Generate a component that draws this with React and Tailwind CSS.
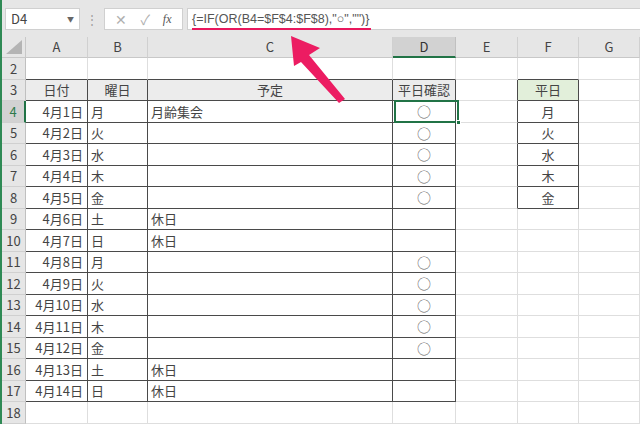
import React from "react";

const cols = ["A", "B", "C", "D", "E", "F", "G"];
const widths = ["w-[62px]", "w-[60px]", "w-[245px]", "w-[63px]", "w-[62px]", "w-[61px]", "w-[61px]"];

const days = ["月", "火", "水", "木", "金", "土", "日"];
const heiJitsu = ["月", "火", "水", "木", "金"];

// build the sheet rows 2..18
const buildRows = () => {
  const rows = [];
  rows.push({ n: 2, cells: {} });
  rows.push({
    n: 3,
    cells: { A: "日付", B: "曜日", C: "予定", D: "平日確認", F: "平日" },
  });
  for (let i = 0; i < 14; i++) {
    const day = days[i % 7];
    const cells = { A: `4月${i + 1}日`, B: day };
    if (i === 0) cells.C = "月齢集会";
    if (day === "土" || day === "日") cells.C = "休日";
    else cells.D = "○";
    if (i < 5) cells.F = heiJitsu[i];
    rows.push({ n: i + 4, cells });
  }
  rows.push({ n: 18, cells: {} });
  return rows;
};

const inTable = (r, c) => {
  if (r >= 3 && r <= 17 && c >= 0 && c <= 3) return true;
  if (r >= 3 && r <= 8 && c === 5) return true;
  return false;
};

const Cell = ({ r, ci, value, width }) => {
  const dark = inTable(r, ci);
  const rightDark = dark || inTable(r, ci + 1);
  const bottomDark = dark || inTable(r + 1, ci);
  const col = cols[ci];
  let align = "justify-start pl-[3px]";
  if (col === "A" && r !== 3) align = "justify-end pr-[4px]";
  if (r === 3 || col === "D" || col === "F") align = "justify-center";
  let bg = "bg-white";
  if (r === 3 && ci <= 3) bg = "bg-[#ececec]";
  if (r === 3 && ci === 5) bg = "bg-[#e2efda]";
  const isMark = value === "○";
  return (
    <div
      className={`${width} h-full shrink-0 flex items-center ${align} ${bg} border-r border-b ${
        rightDark ? "border-r-[#4a4a4a]" : "border-r-[#dedede]"
      } ${bottomDark ? "border-b-[#4a4a4a]" : "border-b-[#dedede]"} ${
        isMark ? "text-[14px] text-[#666] leading-[18px]" : "text-[13px] text-[#444]"
      } overflow-hidden whitespace-nowrap`}
    >
      {value}
    </div>
  );
};

const App = () => {
  const rows = buildRows();
  return (
    <div
      className="relative w-[640px] h-[424px] overflow-hidden bg-white border-l-2 border-l-[#2f8a55]"
      style={{ fontFamily: '"Noto Sans CJK JP", "Noto Sans", sans-serif' }}
    >
      {/* formula bar */}
      <div className="h-[37px] bg-[#e6e6e6] flex items-start pt-[8px] pl-[3px]">
        <div className="w-[75px] h-[22px] bg-white border border-[#d0d0d0] flex items-center justify-between px-[5px]">
          <span className="text-[13px] text-[#444]">D4</span>
          <span className="text-[7px] text-[#666]">▼</span>
        </div>
        <div className="w-[24px] h-[22px] flex items-center justify-center text-[12px] text-[#a0a0a0]">⋮</div>
        <div className="w-[79px] h-[22px] bg-white border border-[#d0d0d0] flex items-center justify-around px-[4px] text-[#b0b0b0]">
          <span className="text-[14px]">✕</span>
          <span className="text-[14px]">✓</span>
          <span
            className="text-[12px] italic text-[#555]"
            style={{ fontFamily: '"Liberation Serif", serif' }}
          >
            fx
          </span>
        </div>
        <div className="flex-1 h-[22px] ml-[4px] bg-white border border-[#d0d0d0] border-r-0 flex items-start pl-[4px] pt-[1px]">
          <span
            className="text-[12.5px] text-[#555] border-b-2 border-b-[#e8175d] leading-[18px] pr-[2px]"
            style={{ fontFamily: '"Liberation Sans", "Noto Sans CJK JP", sans-serif' }}
          >
            {'{=IF(OR(B4=$F$4:$F$8),"○","")}'}
          </span>
        </div>
      </div>

      {/* column headers */}
      <div className="flex h-[21px] bg-[#e6e6e6]">
        <div className="w-[24px] shrink-0 h-full border-r border-b border-[#c8c8c8] flex items-end justify-end p-[3px]">
          <svg width="16" height="14" viewBox="0 0 16 14">
            <polygon points="16,0 16,14 0,14" fill="#b4b4b4" />
          </svg>
        </div>
        {cols.map((c, i) => (
          <div
            key={c}
            className={`${widths[i]} shrink-0 h-full flex items-center justify-center text-[13px] border-r ${
              c === "D"
                ? "bg-[#d2d2d2] text-[#333] border-r-[#c0c0c0] border-b-2 border-b-[#217346]"
                : "text-[#444] border-r-[#d0d0d0] border-b border-b-[#c8c8c8]"
            }`}
          >
            {c}
          </div>
        ))}
      </div>

      {/* rows */}
      {rows.map((row) => (
        <div key={row.n} className="flex h-[21.5px]">
          <div
            className={`w-[24px] shrink-0 h-full flex items-center justify-center text-[13px] border-b border-b-[#d0d0d0] ${
              row.n === 4
                ? "bg-[#d2d2d2] text-[#2f7a4b] border-r-2 border-r-[#217346]"
                : "bg-[#e6e6e6] text-[#444] border-r border-r-[#c0c0c0]"
            }`}
          >
            {row.n}
          </div>
          {cols.map((c, ci) => (
            <Cell key={c} r={row.n} ci={ci} value={row.cells[c]} width={widths[ci]} />
          ))}
        </div>
      ))}

      {/* active cell D4 */}
      <div className="absolute left-[392px] top-[100px] w-[65px] h-[23px] border-2 border-[#217346] pointer-events-none">
        <div className="absolute -right-[4px] -bottom-[4px] w-[5px] h-[5px] bg-[#217346] border border-white" />
      </div>

      {/* pink arrow */}
      <svg className="absolute left-0 top-0 pointer-events-none" width="640" height="424">
        <polygon
          points="289,36 318,48 307,55 343,99 337,103 299,62 292,66"
          fill="#ec1c62"
        />
      </svg>
    </div>
  );
};

export default App;
